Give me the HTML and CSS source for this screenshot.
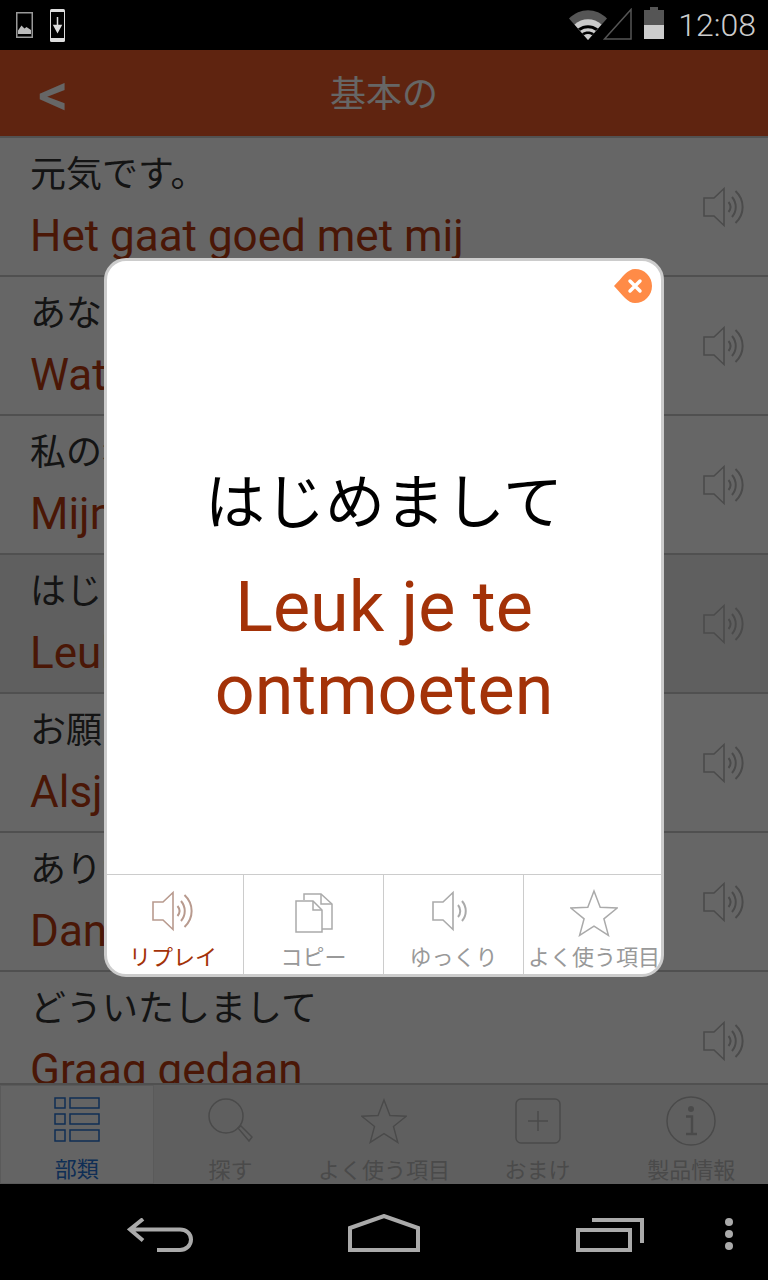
FILE: index.html
```html
<!DOCTYPE html>
<html lang="ja">
<head>
  <meta charset="UTF-8">
  <meta name="viewport" content="width=device-width, initial-scale=1.0">
  <title>基本の</title>
  <link rel="stylesheet" href="styles.css">
</head>
<body>

<svg class="defs" width="0" height="0">
  <symbol id="speaker" viewBox="0 0 44 44">
    <path d="M2 13h10L22 3.500v37L12 31H2z" fill="none" stroke="currentColor" stroke-width="1.600"/>
    <path d="M26.500 17c2.500 3 2.500 7 0 10M30 12c5 6 5 14 0 20M33.500 6c9.500 9 9.500 23 0 32" fill="none" stroke="currentColor" stroke-width="2"/>
  </symbol>
  <symbol id="star" viewBox="0 0 48 48">
    <path d="M24 2l6.200 16.200 17 .8-13.300 10.800 4.500 16.600L24 37.200 9.600 46.400l4.500-16.600L.8 19l17-.8z" fill="none" stroke="currentColor" stroke-width="1.500"/>
  </symbol>
</svg>

<div class="status-bar">
  <div class="status-left">
    <svg width="17" height="26" viewBox="0 0 17 26">
      <rect x=".75" y=".75" width="15.500" height="24.500" fill="none" stroke="#999" stroke-width="1.500"/>
      <path d="M2 22v-3.500l3.500-5 3 3 2-1.500 4.500 3v4z" fill="#bbb"/>
    </svg>
    <svg width="15" height="33" viewBox="0 0 15 33">
      <rect width="15" height="33" rx="1.500" fill="#ddd"/>
      <rect x="1" y="3" width="13" height="26" fill="#000"/>
      <path d="M7.500 8v12M4 16.500L7.500 23l3.500-6.500z" fill="#ddd" stroke="#ddd" stroke-width="1.500"/>
    </svg>
  </div>
  <div class="status-right">
    <svg class="icon-wifi" width="38" height="31" viewBox="0 0 38 31">
      <path d="M0 9.500C11-1.500 27-1.500 38 9.500L19 31z" fill="#555"/>
      <path d="M5.500 15.500C13 8.500 25 8.500 32.500 15.500L19 31z" fill="#ccc"/>
      <path d="M9 19.500c6-4.500 14-4.500 20 0l-2.200 2.300c-4.800-3.300-10.800-3.300-15.600 0z" fill="#000"/>
      <path d="M13 24.200c3.800-2.200 8.200-2.200 12 0l-1.800 2c-2.800-1.500-5.600-1.500-8.400 0z" fill="#000"/>
    </svg>
    <svg class="icon-signal" width="29" height="32" viewBox="0 0 29 32">
      <path d="M1.500 31L28 1.500V31z" fill="none" stroke="#555" stroke-width="1.500"/>
    </svg>
    <svg class="icon-battery" width="20" height="32" viewBox="0 0 20 32">
      <rect y="3" width="20" height="29" fill="#555"/>
      <rect x="6" width="8" height="3" fill="#555"/>
      <rect y="18" width="20" height="14" fill="#ccc"/>
    </svg>
    <span class="clock">12:08</span>
  </div>
</div>

<div class="app">
  <div class="app-header">
    <span class="back">&lt;</span>
    <span class="app-title">基本の</span>
  </div>

  <div class="phrase-list">
    <div class="phrase">
      <div><div class="jp">元気です。</div><div class="nl">Het gaat goed met mij</div></div>
      <svg class="phrase-sound" width="44" height="44"><use href="#speaker"/></svg>
    </div>
    <div class="phrase">
      <div><div class="jp">あなたは?</div><div class="nl">Wat ben jij</div></div>
      <svg class="phrase-sound" width="44" height="44"><use href="#speaker"/></svg>
    </div>
    <div class="phrase">
      <div><div class="jp">私の名前は</div><div class="nl">Mijn naam is</div></div>
      <svg class="phrase-sound" width="44" height="44"><use href="#speaker"/></svg>
    </div>
    <div class="phrase selected">
      <div><div class="jp">はじめまして</div><div class="nl">Leuk je te ontmoeten</div></div>
      <svg class="phrase-sound" width="44" height="44"><use href="#speaker"/></svg>
    </div>
    <div class="phrase">
      <div><div class="jp">お願いします</div><div class="nl">Alsjeblieft</div></div>
      <svg class="phrase-sound" width="44" height="44"><use href="#speaker"/></svg>
    </div>
    <div class="phrase">
      <div><div class="jp">ありがとう</div><div class="nl">Dank je</div></div>
      <svg class="phrase-sound" width="44" height="44"><use href="#speaker"/></svg>
    </div>
    <div class="phrase">
      <div><div class="jp">どういたしまして</div><div class="nl">Graag gedaan</div></div>
      <svg class="phrase-sound" width="44" height="44"><use href="#speaker"/></svg>
    </div>
  </div>

  <div class="tab-bar">
    <div class="tab active">
      <div class="tab-icon">
        <svg width="46" height="46" viewBox="0 0 46 46" fill="none" stroke="currentColor" stroke-width="1.500">
          <path d="M1 1h10v10H1zM16 1h29v10H16zM1 17h10v10H1zM16 17h29v10H16zM1 33h10v11H1zM16 33h29v11H16z"/>
        </svg>
      </div>
      <span>部類</span>
    </div>
    <div class="tab">
      <div class="tab-icon">
        <svg width="46" height="46" viewBox="0 0 46 46" fill="none" stroke="currentColor" stroke-width="1.500">
          <circle cx="19" cy="18" r="17"/>
          <path d="M31 30l3-2 11 11-3 4z"/>
        </svg>
      </div>
      <span>探す</span>
    </div>
    <div class="tab">
      <div class="tab-icon">
        <svg width="46" height="46"><use href="#star"/></svg>
      </div>
      <span>よく使う項目</span>
    </div>
    <div class="tab">
      <div class="tab-icon">
        <svg width="46" height="46" viewBox="0 0 46 46" fill="none" stroke="currentColor" stroke-width="1.500">
          <rect x="1" y="1" width="44" height="44" rx="5"/>
          <path d="M23 13v20M13 23h20"/>
        </svg>
      </div>
      <span>おまけ</span>
    </div>
    <div class="tab">
      <div class="tab-icon">
        <svg width="50" height="50" viewBox="0 0 50 50" fill="none" stroke="currentColor" stroke-width="1.500">
          <circle cx="25" cy="25" r="24"/>
          <circle cx="25" cy="13" r="3" fill="currentColor" stroke="none"/>
          <path d="M20 20.500h6V37M20 38h11" stroke-width="2.500"/>
        </svg>
      </div>
      <span>製品情報</span>
    </div>
  </div>

  <div class="dim"></div>

  <div class="dialog">
    <svg class="dialog-close" width="38" height="34" viewBox="0 0 38 34">
      <path d="M0 17C4 13 8 8 11 5c3-3 6.500-5 10-5 9.500 0 17 7.500 17 17s-7.500 17-17 17c-3.500 0-7-2-10-5-3-3-7-8-11-12z" fill="#ff8b47"/>
      <path d="M16 12l10 10M26 12l-10 10" stroke="#fff" stroke-width="3.500" stroke-linecap="round"/>
    </svg>
    <div class="dialog-body">
      <div class="dialog-jp">はじめまして</div>
      <div class="dialog-nl">Leuk je te ontmoeten</div>
    </div>
    <div class="dialog-actions">
      <div class="action current">
        <div class="action-icon">
          <svg class="icon-sound" width="44" height="44"><use href="#speaker"/></svg>
        </div>
        <span>リプレイ</span>
      </div>
      <div class="action">
        <div class="action-icon">
          <svg width="40" height="40" viewBox="0 0 40 40" fill="none" stroke="currentColor" stroke-width="1.500">
            <path d="M10 7V1h17l11 10v25H27"/>
            <path d="M27 1v10h11"/>
            <path d="M2 8h17l9 9v22H2z" fill="#fff"/>
            <path d="M19 8v9h9"/>
          </svg>
        </div>
        <span>コピー</span>
      </div>
      <div class="action">
        <div class="action-icon">
          <svg class="icon-sound icon-slow" width="36" height="44" viewBox="0 0 36 44" fill="none" stroke="currentColor">
            <path d="M1 13h10l10-9.500v37L11 31H1z" stroke-width="1.600"/>
            <path d="M26 16c3 3.500 3 8.500 0 12M30 12c5 6 5 14 0 20" stroke-width="2"/>
          </svg>
        </div>
        <span>ゆっくり</span>
      </div>
      <div class="action">
        <div class="action-icon">
          <svg width="48" height="48"><use href="#star"/></svg>
        </div>
        <span>よく使う項目</span>
      </div>
    </div>
  </div>
</div>

<div class="nav-bar">
  <svg width="66" height="34" viewBox="0 0 66 34" fill="none" stroke="#aaa" stroke-width="4">
    <path d="M16 1L3 11.500l13 11M3 11.500h50c6 0 11 4 11 10s-5 10.500-11 10.500H30"/>
  </svg>
  <svg class="nav-home" width="72" height="38" viewBox="0 0 72 38" fill="none" stroke="#aaa" stroke-width="4">
    <path d="M2 36V14L36 2l34 12v22z"/>
  </svg>
  <svg width="68" height="34" viewBox="0 0 68 34" fill="none" stroke="#aaa" stroke-width="4">
    <path d="M2 12h52v20H2zM16 2h50v23"/>
  </svg>
  <div class="nav-dots"><i></i><i></i><i></i></div>
</div>

</body>
</html>
```

FILE: styles.css
```css
* {
  margin: 0;
  padding: 0;
  box-sizing: border-box;
}
body {
  width: 768px;
  height: 1280px;
  background: #000;
  display: flex;
  flex-direction: column;
  overflow: hidden;
  font-family: Roboto, "Noto Sans CJK JP", sans-serif;
}
.defs {
  position: absolute;
}
svg {
  display: block;
  flex: none;
}

.status-bar {
  height: 50px;
  display: flex;
  justify-content: space-between;
  align-items: center;
  padding: 0 12px 0 16px;
}
.status-left {
  display: flex;
  align-items: center;
  gap: 17px;
}
.status-right {
  display: flex;
  align-items: center;
}
.icon-wifi {
  margin-top: -2px;
}
.icon-signal {
  margin-left: -4px;
  margin-top: -3px;
}
.icon-battery {
  margin-left: 12px;
  margin-top: -4px;
}
.clock {
  margin-left: 14px;
  font-size: 32px;
  font-weight: 300;
  color: #ccc;
}

.app {
  position: relative;
  height: 1134px;
  display: flex;
  flex-direction: column;
  background: #fff;
  overflow: hidden;
}
.app-header {
  height: 88px;
  flex: none;
  background: #ee5a28;
  color: #fff;
  display: flex;
  align-items: center;
  justify-content: center;
  position: relative;
  border-bottom: 2px solid #ccc;
  padding-bottom: 4px;
}
.back {
  position: absolute;
  left: 38px;
  top: 9px;
  font-size: 60px;
  font-weight: 500;
}
.app-title {
  font-size: 36px;
}

.phrase-list {
  flex: 1;
  overflow: hidden;
}
.phrase {
  height: 139px;
  display: flex;
  justify-content: space-between;
  align-items: center;
  padding: 2px 22px 0 30px;
  border-bottom: 2px solid #c8c8c8;
}
.phrase.selected {
  background: #eee;
}
.jp {
  font-size: 36px;
  line-height: 48px;
  color: #333;
}
.nl {
  margin-top: 9px;
  font-size: 44px;
  line-height: 56px;
  color: #b83a10;
}
.phrase-sound {
  color: #bbb;
  margin-top: -2px;
}

.tab-bar {
  height: 101px;
  flex: none;
  display: grid;
  grid-template-columns: repeat(5, 1fr);
  background: #eee;
  border-top: 2px solid #c8c8c8;
}
.tab {
  display: flex;
  flex-direction: column;
  align-items: center;
  justify-content: flex-end;
  gap: 10px;
  color: #b8b8b8;
  font-size: 22px;
  line-height: 30px;
}
.tab span {
  margin-bottom: -2px;
}
.tab-icon {
  height: 50px;
  display: flex;
  align-items: center;
}
.tab.active {
  background: #fafafa;
  border: 1px solid #e0e0e0;
  color: #2673d4;
}

.dim {
  position: absolute;
  inset: 0;
  background: rgba(0, 0, 0, 0.6);
}

.dialog {
  position: absolute;
  left: 104px;
  top: 208px;
  width: 560px;
  height: 719px;
  background: #fff;
  border: 3px solid #ccc;
  border-radius: 22px;
  display: flex;
  flex-direction: column;
  overflow: hidden;
}
.dialog-close {
  position: absolute;
  right: 9px;
  top: 8px;
}
.dialog-body {
  flex: 1;
  display: flex;
  flex-direction: column;
  justify-content: center;
  align-items: center;
  text-align: center;
  padding: 58px 40px 0;
}
.dialog-jp {
  font-size: 60px;
  line-height: 84px;
  color: #000;
}
.dialog-nl {
  margin-top: 20px;
  font-size: 70px;
  line-height: 83px;
  color: #a33208;
}
.dialog-actions {
  height: 100px;
  flex: none;
  display: grid;
  grid-template-columns: 136px 140px 140px 1fr;
  border-top: 1px solid #ccc;
}
.action {
  display: flex;
  flex-direction: column;
  align-items: center;
  justify-content: flex-end;
  gap: 6px;
  color: #999;
  font-size: 22px;
  line-height: 30px;
  border-left: 1px solid #ccc;
  white-space: nowrap;
  padding-bottom: 1px;
}
.action:first-child {
  border-left: 0;
  padding-right: 4px;
}
.action:last-child {
  padding-left: 3px;
}
.action-icon {
  height: 48px;
  display: flex;
  align-items: center;
  color: #aaa;
}
.icon-sound {
  margin-top: -4px;
}
.icon-slow {
  margin-left: -8px;
}
.action.current {
  color: #a33208;
}
.action.current .action-icon {
  color: #b89a8e;
}

.nav-bar {
  flex: 1;
  display: grid;
  grid-template-columns: 320px 128px 324px;
  position: relative;
  align-items: center;
  justify-items: center;
  padding-top: 5px;
}
.nav-home {
  margin-top: -3px;
}
.nav-dots {
  position: absolute;
  right: 35px;
  top: 34px;
  display: flex;
  flex-direction: column;
  gap: 4px;
}
.nav-dots i {
  width: 8px;
  height: 8px;
  border-radius: 50%;
  background: #aaa;
}
```
